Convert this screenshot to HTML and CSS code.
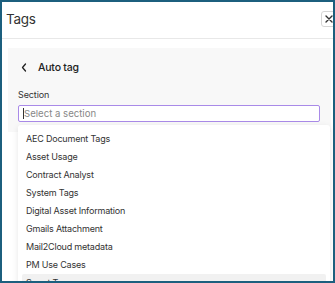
FILE: index.html
```html
<!DOCTYPE html>
<html>
<head>
<meta charset="utf-8">
<link rel="stylesheet" href="styles.css">
</head>
<body>
<div class="frame">
  <div class="header">
    <div class="title">Tags</div>
    <button class="close" aria-label="Close">
      <svg width="8" height="8" viewBox="0 0 8 8"><path d="M1 1L7 7M7 1L1 7" stroke="#333" stroke-width="1.4" stroke-linecap="round"/></svg>
    </button>
  </div>
  <div class="panel">
    <div class="back-row">
      <svg class="chev" width="6" height="9" viewBox="0 0 6 9"><path d="M4.5 1L1.5 4.5L4.5 8" fill="none" stroke="#222" stroke-width="1.3" stroke-linecap="round" stroke-linejoin="round"/></svg>
      <span class="back-title">Auto tag</span>
    </div>
    <div class="label">Section</div>
    <div class="input"><span class="caret"></span><span class="ph">Select a section</span></div>
  </div>
  <div class="dropdown">
    <div class="item">AEC Document Tags</div>
    <div class="item">Asset Usage</div>
    <div class="item">Contract Analyst</div>
    <div class="item">System Tags</div>
    <div class="item">Digital Asset Information</div>
    <div class="item">Gmails Attachment</div>
    <div class="item">Mail2Cloud metadata</div>
    <div class="item">PM Use Cases</div>
    <div class="item active">Smart Tags</div>
  </div>
</div>
</body>
</html>
```
FILE: styles.css
```css
html, body {
  margin: 0;
  padding: 0;
  background: #fff;
}
body {
  font-family: Inter, "Noto Sans", sans-serif;
  color: #222;
}
.frame {
  position: relative;
  width: 335px;
  height: 283px;
  box-sizing: border-box;
  border: 2px solid #1c5f7e;
  overflow: hidden;
  background: #fff;
}
.header {
  height: 36px;
  border-bottom: 1px solid #e8e8e8;
  display: flex;
  align-items: center;
  justify-content: space-between;
  padding-left: 4px;
}
.title {
  font-size: 13.5px;
  letter-spacing: -0.3px;
  color: #333;
  margin-top: -3px;
}
.close {
  width: 15px;
  height: 16px;
  margin-right: -3px;
  margin-top: -3px;
  border: 1px solid #d6d6d6;
  border-radius: 3px;
  background: #fff;
  padding: 0;
  display: flex;
  align-items: center;
  justify-content: center;
}
.panel {
  margin: 9px 2px 0 6px;
  background: #f8f8f8;
  padding: 12px 10px 10px 10px;
  height: 62px;
}
.back-row {
  display: flex;
  align-items: center;
  height: 14px;
  padding-left: 3px;
}
.chev { display: block; }
.back-title {
  margin-left: 11px;
  font-size: 10.5px;
  font-weight: 500;
  letter-spacing: -0.2px;
  color: #222;
}
.label {
  margin-top: 15px;
  font-size: 9px;
  letter-spacing: -0.1px;
  color: #333;
  height: 13px;
}
.input {
  margin-top: 3px;
  height: 15px;
  width: 296px;
  border: 1.5px solid #a98ae8;
  border-radius: 2px;
  background: #fff;
  display: flex;
  align-items: center;
  padding-left: 4px;
}
.caret {
  width: 1px;
  height: 11px;
  background: #333;
}
.ph {
  font-size: 9.6px;
  color: #888;
}
.dropdown {
  position: absolute;
  left: 16px;
  top: 123px;
  width: 304px;
  background: #fff;
  box-shadow: 0 2px 6px rgba(0,0,0,0.10);
  border-radius: 3px;
  padding: 5px 4px 0 4px;
}
.item {
  height: 18px;
  line-height: 18px;
  font-size: 9px;
  letter-spacing: -0.2px;
  color: #333;
  padding-left: 4px;
  border-radius: 2px;
}
.item.active {
  background: #f1f1f1;
}
```
